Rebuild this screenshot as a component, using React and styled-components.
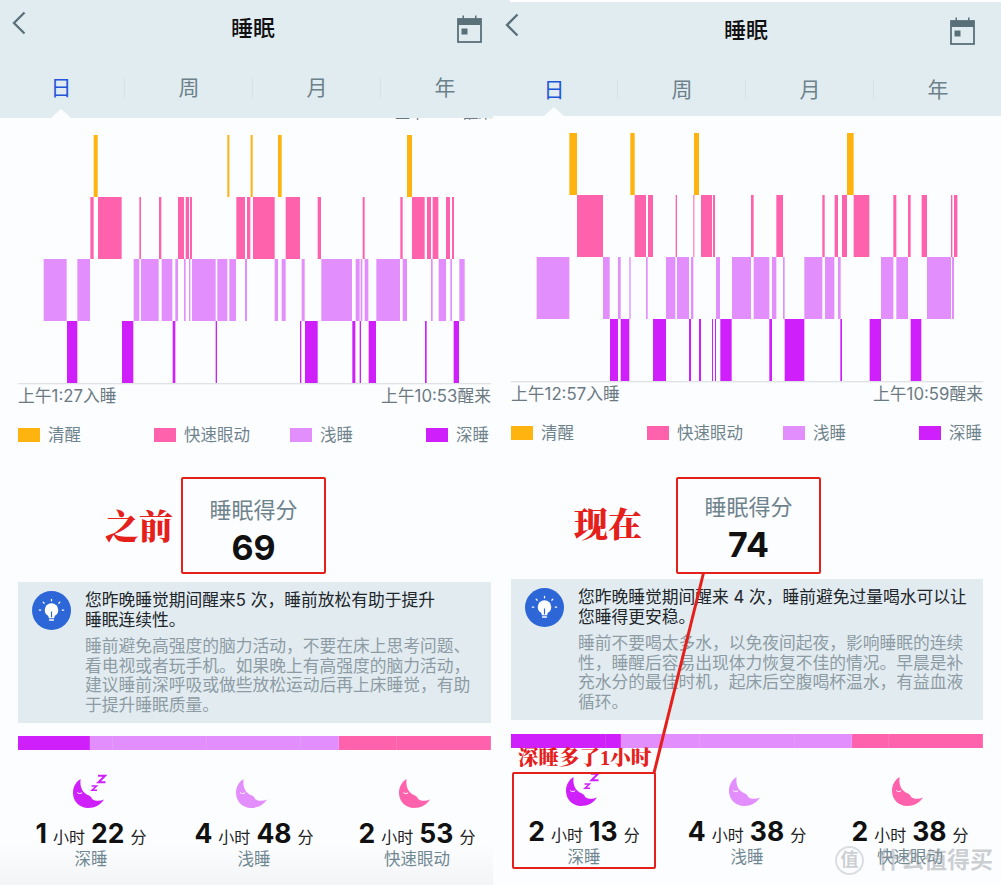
import React from 'react';
import styled, { createGlobalStyle } from 'styled-components';

const C = { awake: '#ffb30e', rem: '#ff62ac', light: '#e28efc', deep: '#cf1ffb' };
const SANS = `"Inter", "Noto Sans CJK SC", sans-serif`;
const RED = '#e5201b';

const Global = createGlobalStyle`
  html, body { margin: 0; padding: 0; background: #fcfdff; }
  * { box-sizing: border-box; }
`;

const Page = styled.div`
  position: relative; display: flex; width: 1001px; height: 885px; overflow: hidden;
  background: #fcfdff; font-family: ${SANS};
`;
const Panel = styled.section`
  flex: none; display: flex; flex-direction: column; width: ${p => p.$w}px; height: 885px;
  background: ${p => p.$fade ? 'linear-gradient(to bottom, #fcfdff 0, #fcfdff 845px, #f3f4f6 885px)' : '#fcfdff'};
`;
const Header = styled.header`
  position: relative; flex: none; height: ${p => p.$h}px; padding-top: ${p => p.$top}px;
  padding-right: ${p => p.$ext}px; background: #e1ecf1;
`;
const TopBar = styled.div`
  display: grid; grid-template-columns: 1fr auto 1fr; align-items: center; height: 56px; padding: 0 11px 0 12px;
`;
const BackIcon = styled.svg`width: 14px; height: 24px; margin-top: -10px; justify-self: start; display: block;`;
const CalIcon = styled.svg`width: 25px; height: 28px; justify-self: end; display: block; margin-top: 2px;`;
const Title = styled.h1`margin: 0 0 0 12px; font-size: 22px; font-weight: 500; color: #111; line-height: 30px;`;
const Tabs = styled.div`display: grid; grid-template-columns: repeat(4, 128px); margin: 12px 0 0 -3px;`;
const Tab = styled.div`
  height: 40px; line-height: 40px; text-align: center; font-size: 21px;
  color: ${p => p.$active ? '#2255d8' : '#6d818a'};
  position: relative;
  &:not(:last-child)::after {
    content: ''; position: absolute; right: 0; top: 10px; width: 1px; height: 20px; background: #d7e2e7;
  }
`;
const Notch = styled.div`
  position: absolute; left: 51px; bottom: 0; width: 0; height: 0;
  border-left: 10px solid transparent; border-right: 10px solid transparent; border-bottom: 9px solid #fcfdff;
`;
const ClippedNote = styled.div`
  position: absolute; left: 395px; top: 118px; width: 96px; height: 3px; overflow: hidden;
  font-size: 15px; line-height: 16px; color: #6b7a82; white-space: nowrap;
  span { display: block; margin-top: -13px; }
`;
const Body = styled.div`flex: 1; display: flex; flex-direction: column; padding: 17px ${p => p.$ext + p.$inset}px 0 18px;`;
const ChartSvg = styled.svg`display: block; flex: none; width: 493px; height: 250px; margin-left: -18px;`;
const TimeRow = styled.div`
  display: flex; justify-content: space-between; height: 20px; line-height: 20px;
  font-size: 16.800px; color: #6b7a82; margin-top: 1px; margin-bottom: -1px;
`;
const Legend = styled.div`
  display: grid; grid-template-columns: repeat(3, 136px) 1fr; height: 20px; margin-top: 20px;
`;
const LegendItem = styled.div`
  display: flex; align-items: center; gap: 8px; font-size: 16.500px; line-height: 20px; color: #6f838c; white-space: nowrap;
`;
const Swatch = styled.i`display: block; flex: none; width: 22px; height: 14px; background: ${p => p.$c};`;
const ScoreBox = styled.div`
  flex: none; width: 145px; height: 97px; margin: ${p => p.$mt}px 0 0 ${p => p.$ml}px;
  padding-top: ${p => p.$pt}px; border: 2px solid ${RED}; border-radius: 2px; text-align: center;
`;
const ScoreTitle = styled.div`font-size: 22px; line-height: 26px; color: #6f838c;`;
const ScoreValue = styled.div`margin-top: 7px; font-size: 34px; line-height: 36px; font-weight: 700; color: #111;`;
const Insight = styled.div`
  flex: none; display: flex; gap: 14px; height: 141px; margin-top: ${p => p.$mt}px; padding: 9px 0 0 14px; background: #e2ebf0;
`;
const BulbIcon = styled.svg`flex: none; display: block; width: 39px; height: 39px;`;
const InsightText = styled.div`flex: 1; white-space: nowrap; margin-top: -1px;`;
const InsightHead = styled.p`margin: 0; font-size: 16.750px; line-height: 20px; color: #20262a;`;
const InsightBody = styled.p`margin: 7px 0 0; font-size: 16.750px; line-height: 19.600px; color: #8d9ca4;`;
const SegBar = styled.div`display: flex; flex: none; height: 14px; margin-top: ${p => p.$mt}px;`;
const Seg = styled.div`
  flex: ${p => p.$g} 0 0; background: ${p => p.$c}; box-shadow: inset -1px 0 0 rgba(255,255,255,.1);
`;
const Stats = styled.div`display: grid; grid-template-columns: repeat(3, 163px); margin: ${p => p.$mt}px 0 0 -8.500px;`;
const Stat = styled.div`display: flex; flex-direction: column; align-items: center;`;
const MoonIcon = styled.svg`display: block; width: 36px; height: 35px;`;
const Duration = styled.div`
  display: flex; align-items: baseline; gap: 6px; height: 30px; margin-top: 9px; line-height: 30px; color: #111;
`;
const Big = styled.b`font-size: 26.500px; font-weight: 700;`;
const Unit = styled.span`font-size: 16px; color: #222;`;
const StatLabel = styled.div`margin-top: 1px; font-size: 16.500px; line-height: 20px; color: #6f8791;`;

const Stamp = styled.div`
  position: absolute; left: ${p => p.$x}px; top: ${p => p.$y}px; color: ${RED}; white-space: nowrap; font-weight: 900;
  font-family: "Liberation Serif", "Noto Serif CJK SC", "Noto Sans CJK SC", serif; font-size: ${p => p.$s}px; line-height: 1;
`;
const Highlight = styled.div`
  position: absolute; left: 512px; top: 772px; width: 144px; height: 97px; border: 2px solid ${RED}; border-radius: 2px;
`;
const Pointer = styled.svg`position: absolute; left: 640px; top: 570px; width: 80px; height: 210px; display: block;`;
const TopStrip = styled.div`position: absolute; left: 510px; top: 0; right: 0; height: 2px; background: #fff;`;
const Watermark = styled.div`
  position: absolute; left: 835px; top: 845px; display: flex; align-items: center; gap: 14px;
  color: rgba(150,155,160,.48); font-size: 23px; line-height: 30px; font-weight: 700;
`;
const WatermarkSeal = styled.span`
  display: flex; align-items: center; justify-content: center; width: 29px; height: 29px; border-radius: 50%;
  border: 2px solid rgba(170,175,180,.4); font-size: 18px;
`;

const Bars = ({ row, color, items }) =>
  items.map(([a, b]) => <rect key={a} x={a} y={row * 186} width={b - a} height={186} fill={color} />);

function Chart({ data, offset, axis }) {
  return (
    <ChartSvg viewBox={`${-offset} 0 1479 750`} aria-hidden="true">
      <Bars row={0} color={C.awake} items={data.awake} />
      <Bars row={1} color={C.rem} items={data.rem} />
      <Bars row={2} color={C.light} items={data.light} />
      <Bars row={3} color={C.deep} items={data.deep} />
      <rect x={axis[0]} y={744} width={axis[1] - axis[0]} height={4} fill="#dfe3e6" />
    </ChartSvg>
  );
}

function Moon({ color, zz }) {
  return (
    <MoonIcon viewBox="0 -5 36 35" aria-hidden="true">
      <path fill={color} d="M7.600 0C2.600 3 0 8 0 14c0 8.500 6.800 15 15 15 7 0 12.800-3.500 16-8.500-3 1.300-6 1.500-9 .9-1-.3-2.200-1-3-1.400 0-1.500-1.500-3-3.500-3.800C9.500 14 6.500 8 7.600 0Z" />
      <path fill="none" stroke="#fff" strokeWidth="1" strokeLinecap="round" d="M4.500 13.800c1.500 1 3 1 4.300.1" />
      {zz && (
        <g fill="none" stroke={color} strokeLinejoin="miter">
          <path strokeWidth="2" d="M25 -3.200h7l-6.500 6.400h7" />
          <path strokeWidth="1.500" d="M18.500 7h5l-4.500 4.200h5" />
        </g>
      )}
    </MoonIcon>
  );
}

function Bulb() {
  return (
    <BulbIcon viewBox="0 0 40 40" aria-hidden="true">
      <circle cx="20" cy="20" r="20" fill="#2d66d6" />
      <circle cx="20" cy="19.500" r="7" fill="#fff" />
      <path fill="#fff" d="M16.500 24h7l-.8 4h-5.400Z" />
      <rect x="17.300" y="29" width="5.400" height="1.500" rx=".7" fill="#fff" />
      <path stroke="#2d66d6" strokeWidth="1.200" fill="none" d="M20 27v-6" />
      <g stroke="#fff" strokeWidth="1.300" strokeLinecap="round">
        <path d="M20 8.500v1.500M11.500 11.500l1 1M28.500 11.500l-1 1M7.500 19.500h1.500M31 19.500h1.500" />
      </g>
    </BulbIcon>
  );
}

const CalendarGlyph = () => (
  <CalIcon viewBox="0 0 25 28" aria-hidden="true">
    <path fill="#5a7079" d="M1 4h23v6H1ZM5.500 0.500h1.500v4H5.500ZM18 0.500h1.500v4H18ZM4.500 13.500h6v6h-6Z" />
    <rect x="1" y="4" width="23" height="23" fill="none" stroke="#5a7079" strokeWidth="1.800" />
  </CalIcon>
);

const left = {
  w: 493, ext: 0, inset: 2, headerH: 118, headerTop: 0, fade: true, offset: 0, axis: [54, 1473],
  data: {
    awake: [[281,293],[682,688],[752,758],[834,845],[1221,1236]],
    rem: [[271,281],[294,365],[418,423],[477,484],[534,552],[557,567],[570,576],[709,735],[741,751],[759,824],[857,900],[953,963],[1088,1094],[1201,1208],[1236,1274],[1281,1293],[1298,1315],[1338,1350],[1356,1362]],
    light: [[131,200],[232,270],[401,418],[423,476],[485,517],[526,534],[552,557],[567,571],[576,647],[652,682],[688,708],[735,741],[824,834],[845,857],[905,914],[964,1056],[1067,1079],[1082,1087],[1094,1105],[1129,1200],[1208,1221],[1293,1298],[1316,1338],[1351,1356],[1378,1394]],
    deep: [[201,232],[366,400],[518,526],[647,651],[900,904],[915,953],[1057,1066],[1079,1083],[1106,1128],[1275,1280],[1361,1377]],
  },
  start: '上午1:27入睡', end: '上午10:53醒来',
  scoreMt: 32, scoreMl: 163, scorePt: 18, score: 69,
  insightMt: 8, barMt: 13, statsMt: 24,
  head: ['您昨晚睡觉期间醒来5 次，睡前放松有助于提升', '睡眠连续性。'],
  body: ['睡前避免高强度的脑力活动，不要在床上思考问题、', '看电视或者玩手机。如果晚上有高强度的脑力活动，', '建议睡前深呼吸或做些放松运动后再上床睡觉，有助', '于提升睡眠质量。'],
  segs: [[72,C.deep],[23,C.light],[94,C.light],[94,C.light],[38,C.light],[58,C.rem],[94,C.rem]],
  stats: [['1','22','深睡',C.deep,true],['4','48','浅睡',C.light,false],['2','53','快速眼动',C.rem,false]],
};

const right = {
  w: 508, ext: 15, inset: 3, headerH: 116, headerTop: 2, fade: false, offset: 21, axis: [33, 1450],
  data: {
    awake: [[208,231],[391,404],[582,597],[1041,1061]],
    rem: [[231,309],[404,438],[444,459],[527,531],[580,583],[603,636],[639,645],[753,761],[829,849],[967,974],[1004,1014],[1026,1041],[1061,1108],[1180,1189],[1224,1232],[1265,1281],[1353,1357],[1362,1372]],
    light: [[110,208],[309,329],[354,362],[388,392],[438,443],[498,526],[531,567],[573,580],[648,660],[696,753],[761,808],[816,829],[849,854],[913,967],[975,1003],[1014,1022],[1143,1180],[1189,1224],[1281,1353],[1356,1362]],
    deep: [[330,354],[362,388],[459,498],[567,573],[597,603],[636,639],[645,648],[661,695],[808,816],[854,913],[1021,1026],[1109,1143],[1232,1264]],
  },
  start: '上午12:57入睡', end: '上午10:59醒来',
  scoreMt: 34, scoreMl: 165, scorePt: 15, score: 74,
  insightMt: 5, barMt: 14, statsMt: 24,
  head: ['您昨晚睡觉期间醒来 4 次，睡前避免过量喝水可以让', '您睡得更安稳。'],
  body: ['睡前不要喝太多水，以免夜间起夜，影响睡眠的连续', '性，睡醒后容易出现体力恢复不佳的情况。早晨是补', '充水分的最佳时机，起床后空腹喝杯温水，有益血液', '循环。'],
  segs: [[95,C.deep],[15.600,C.deep],[79,C.light],[95,C.light],[57,C.light],[37,C.rem],[94,C.rem]],
  stats: [['2','13','深睡',C.deep,true],['4','38','浅睡',C.light,false],['2','38','快速眼动',C.rem,false]],
};

function SleepPanel({ d, showNote }) {
  return (
    <Panel $w={d.w} $fade={d.fade}>
      <Header $h={d.headerH} $top={d.headerTop} $ext={d.ext}>
        <TopBar>
          <BackIcon viewBox="0 0 14 24" aria-hidden="true">
            <path d="M12.500 1.500 2 12l10.500 10.500" fill="none" stroke="#5a7079" strokeWidth="2.300" />
          </BackIcon>
          <Title>睡眠</Title>
          <CalendarGlyph />
        </TopBar>
        <Tabs>
          {['日', '周', '月', '年'].map((t, i) => <Tab key={t} $active={i === 0}>{t}</Tab>)}
        </Tabs>
        <Notch />
      </Header>
      {showNote && <ClippedNote><span>上午10:53醒来</span></ClippedNote>}
      <Body $ext={d.ext} $inset={d.inset}>
        <Chart data={d.data} offset={d.offset} axis={d.axis} />
        <TimeRow><span>{d.start}</span><span>{d.end}</span></TimeRow>
        <Legend>
          <LegendItem><Swatch $c={C.awake} />清醒</LegendItem>
          <LegendItem><Swatch $c={C.rem} />快速眼动</LegendItem>
          <LegendItem><Swatch $c={C.light} />浅睡</LegendItem>
          <LegendItem><Swatch $c={C.deep} />深睡</LegendItem>
        </Legend>
        <ScoreBox $mt={d.scoreMt} $ml={d.scoreMl} $pt={d.scorePt}>
          <ScoreTitle>睡眠得分</ScoreTitle>
          <ScoreValue>{d.score}</ScoreValue>
        </ScoreBox>
        <Insight $mt={d.insightMt}>
          <Bulb />
          <InsightText>
            <InsightHead>{d.head.map((l, i) => <React.Fragment key={i}>{l}{i < d.head.length - 1 && <br />}</React.Fragment>)}</InsightHead>
            <InsightBody>{d.body.map((l, i) => <React.Fragment key={i}>{l}{i < d.body.length - 1 && <br />}</React.Fragment>)}</InsightBody>
          </InsightText>
        </Insight>
        <SegBar $mt={d.barMt}>
          {d.segs.map(([g, c], i) => <Seg key={i} $g={g} $c={c} />)}
        </SegBar>
        <Stats $mt={d.statsMt}>
          {d.stats.map(([h, m, label, c, zz]) => (
            <Stat key={label}>
              <Moon color={c} zz={zz} />
              <Duration><Big>{h}</Big><Unit>小时</Unit><Big>{m}</Big><Unit>分</Unit></Duration>
              <StatLabel>{label}</StatLabel>
            </Stat>
          ))}
        </Stats>
      </Body>
    </Panel>
  );
}

export default function App() {
  return (
    <Page>
      <Global />
      <SleepPanel d={left} showNote />
      <SleepPanel d={right} />
      <TopStrip />
      <Stamp $x={105} $y={511} $s={34}>之前</Stamp>
      <Stamp $x={574} $y={509} $s={34}>现在</Stamp>
      <Stamp $x={518} $y={748} $s={20.500}>深睡多了1小时</Stamp>
      <Highlight />
      <Pointer viewBox="0 0 80 210" aria-hidden="true">
        <path d="M63.500 3 14 203" stroke={RED} strokeWidth="3" fill="none" />
      </Pointer>
      <Watermark>
        <WatermarkSeal>值</WatermarkSeal>
        <span>什么值得买</span>
      </Watermark>
    </Page>
  );
}
